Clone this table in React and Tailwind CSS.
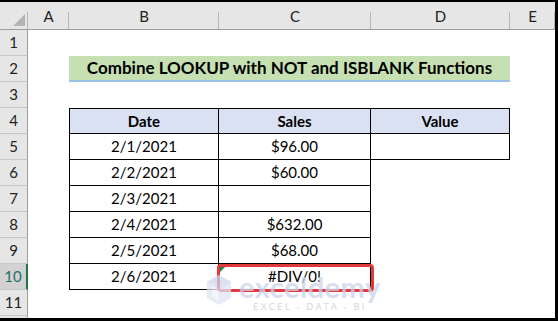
const cols = ['A', 'B', 'C', 'D', 'E']

const data = [
  { date: '2/1/2021', sales: '$96.00' },
  { date: '2/2/2021', sales: '$60.00' },
  { date: '2/3/2021', sales: '' },
  { date: '2/4/2021', sales: '$632.00' },
  { date: '2/5/2021', sales: '$68.00' },
  { date: '2/6/2021', sales: '#DIV/0!' },
]

const RowHead = ({ n, active }) => (
  <div
    className={
      active
        ? 'bg-[#d2d2d2] border-b border-[#c6c6c6] border-r-2 border-r-[#217346] text-[#1f6f6a] flex items-center justify-center text-[15px]'
        : 'bg-[#e6e6e6] border-b border-[#c6c6c6] border-r border-r-[#9e9e9e] text-[#222] flex items-center justify-center text-[15px]'
    }
  >
    {n}
  </div>
)

function Watermark() {
  return (
    <div className="absolute left-[206px] top-[272px] flex items-start gap-[7px] opacity-75 pointer-events-none">
      <svg width="26" height="32" viewBox="0 0 26 32">
        <path d="M13 1 L25 8 L25 24 L13 31 L1 24 L1 8 Z" fill="#dfe5f3" />
        <path d="M13 1 L25 8 L13 15 L1 8 Z" fill="#cdd7ee" />
        <path d="M6 12 L13 16 L13 27 L6 23 Z" fill="#eef1f9" />
      </svg>
      <div className="flex flex-col items-center">
        <span className="text-[29px] leading-[26px] font-bold text-[#c9d3ec] tracking-[0.5px]">exceldemy</span>
        <span className="text-[9px] leading-[11px] text-[#c4c9d4] tracking-[2.5px] mt-[1px]">EXCEL · DATA · BI</span>
      </div>
    </div>
  )
}

export default function App() {
  return (
    <div
      className="w-[558px] h-[321px] bg-black pt-[2px] pr-[3px] pb-[3px] overflow-hidden"
      style={{ fontFamily: 'Lato, "Open Sans", sans-serif' }}
    >
      <div className="relative w-[555px] h-[316px] bg-white overflow-hidden">
        <div className="grid grid-cols-[28px_41px_150px_152px_139px_45px] grid-rows-[28px_repeat(11,26px)_2px] text-black">
          {/* column headers */}
          <div className="bg-[#e6e6e6] border-b border-[#9e9e9e] relative">
            <div className="absolute right-[3px] bottom-[3px] w-0 h-0 border-l-[12px] border-l-transparent border-b-[12px] border-b-[#b4b4b4]" />
            <div className="absolute right-0 top-[10px] bottom-0 w-px bg-[#b8b8b8]" />
          </div>
          {cols.map((c) => (
            <div key={c} className="bg-[#e6e6e6] border-b border-[#9e9e9e] relative flex items-center justify-center text-[15px] text-[#222] pt-[2px]">
              {c}
              <div className="absolute right-0 top-[10px] bottom-0 w-px bg-[#b8b8b8]" />
            </div>
          ))}

          {/* row 1 */}
          <RowHead n={1} />
          <div className="col-span-5" />

          {/* row 2 title */}
          <RowHead n={2} />
          <div />
          <div className="col-span-3 bg-[#c6e0b4] border-b-2 border-[#9bc2e6] flex items-center justify-center font-bold text-[17px]">
            Combine LOOKUP with NOT and ISBLANK Functions
          </div>
          <div />

          {/* row 3 */}
          <RowHead n={3} />
          <div className="col-span-5" />

          {/* row 4 table header */}
          <RowHead n={4} />
          <div />
          <div className="bg-[#d9e1f2] border border-black flex items-center justify-center font-bold text-[15px]">Date</div>
          <div className="bg-[#d9e1f2] border-y border-r border-black flex items-center justify-center font-bold text-[15px]">Sales</div>
          <div className="bg-[#d9e1f2] border-y border-r border-black flex items-center justify-center font-bold text-[15px]">Value</div>
          <div />

          {data.map((r, i) => (
            <RowLine key={i} n={i + 5} r={r} value={i === 0} active={i === 5} />
          ))}

          {/* row 11 */}
          <RowHead n={11} />
          <div className="col-span-5" />
          <div className="bg-[#e6e6e6] border-r border-[#9e9e9e]" />
          <div className="col-span-5" />
        </div>

        {/* selected cell highlight */}
        <div className="absolute left-[217px] top-[262px] w-[157px] h-[28px] border-[3px] border-[#e0393e] rounded-[4px]" />
        <div className="absolute left-[220px] top-[265px] w-0 h-0 border-t-[5px] border-t-[#1e8a3c] border-r-[5px] border-r-transparent" />
        <Watermark />
      </div>
    </div>
  )
}

function RowLine({ n, r, value, active }) {
  return (
    <>
      <RowHead n={n} active={active} />
      <div />
      <div className="border-x border-b border-black flex items-center justify-center text-[15px]">{r.date}</div>
      <div className="border-r border-b border-black flex items-center justify-center text-[15px]">{r.sales}</div>
      {value ? <div className="border-r border-b border-black" /> : <div />}
      <div />
    </>
  )
}
